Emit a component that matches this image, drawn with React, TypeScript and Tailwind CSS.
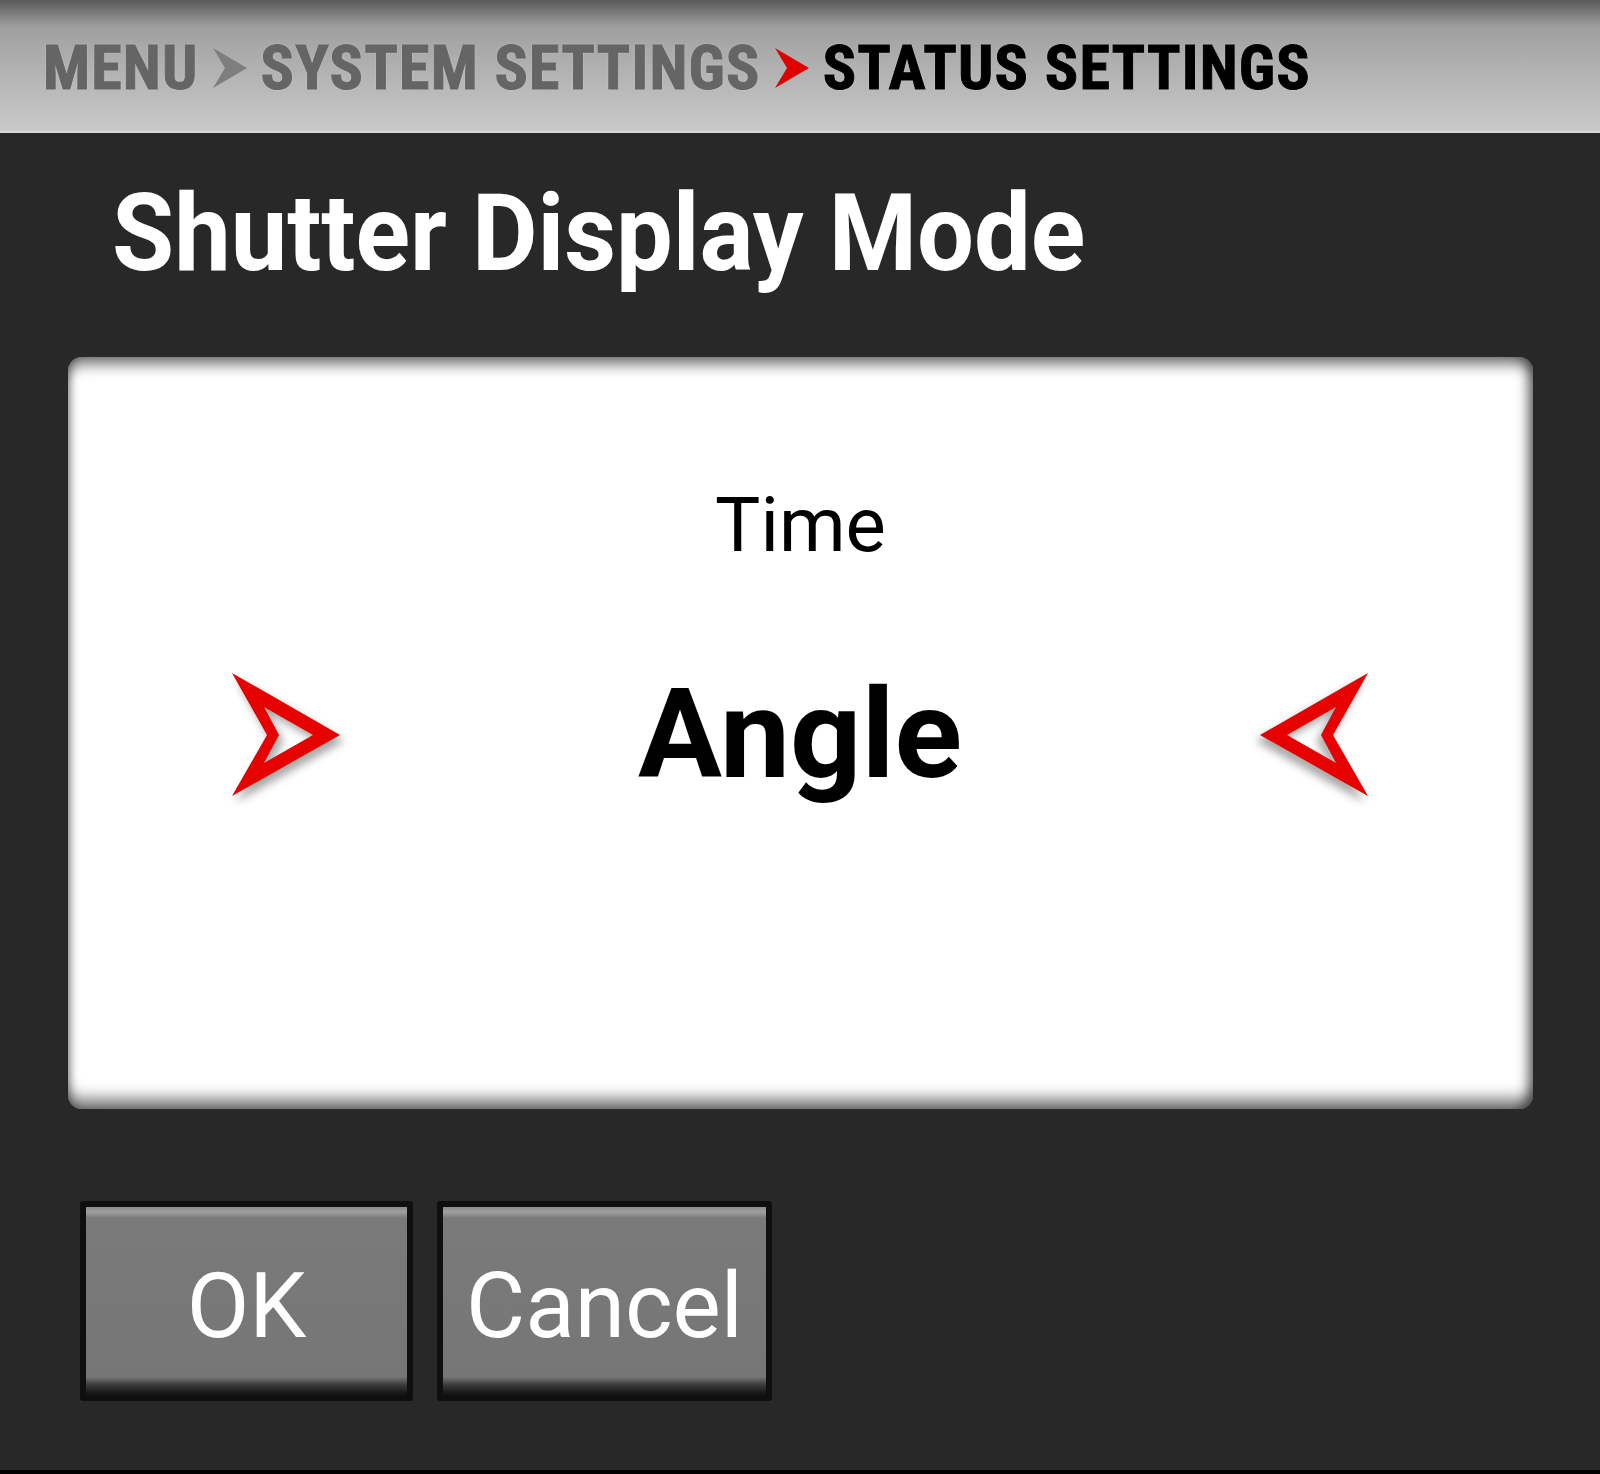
import React from 'react';

const Crumb: React.FC<{ red?: boolean }> = ({ red }) => (
  <svg width="34" height="40" viewBox="0 0 34 40" className="shrink-0">
    <path d="M0 0 L34 20 L0 40 L12 20 Z" fill={red ? '#e00000' : '#7e7e7e'} />
  </svg>
);

const Pointer: React.FC<{ flip?: boolean }> = ({ flip }) => (
  <svg
    width="110"
    height="124"
    viewBox="0 0 110 124"
    className={`shrink-0 overflow-visible ${flip ? '-scale-x-100' : ''}`}
    style={{ filter: 'drop-shadow(4px 6px 4px rgba(0,0,0,0.35))' }}
  >
    <path
      fillRule="evenodd"
      d="M0 0 L108 62 L0 123 L35 62 Z M32 34 L81 62 L32 90 L47 62 Z"
      fill="#e60000"
    />
  </svg>
);

const Button: React.FC<{ label: string; w: string }> = ({ label, w }) => (
  <div className={`${w} h-[200px] rounded-[3px] bg-[#0f0f0f] p-[6px]`}>
    <div className="flex h-full w-full items-center justify-center bg-[linear-gradient(to_bottom,#8c8c8c_0px,#a0a0a0_5px,#7a7a7a_11px,#767676_170px,#404040_177px,#161616_186px)] pt-[10px] font-['Roboto',sans-serif] text-[91px] leading-none text-white">
      {label}
    </div>
  </div>
);

export default function App() {
  const crumbText =
    "font-['Roboto_Condensed','Roboto',sans-serif] text-[62px] font-bold leading-none tracking-[1.2px] [-webkit-text-stroke:1px_currentColor] [text-shadow:0_0_2px_rgba(230,230,230,0.9)]";
  return (
    <div className="flex h-[1474px] w-[1600px] flex-col border-b-4 border-black bg-[#282828]">
      {/* breadcrumb bar */}
      <div className="flex h-[133px] shrink-0 items-center gap-[14px] border-b-2 border-[#d6d6d6] bg-[linear-gradient(to_bottom,#585858_0px,#9e9e9e_26px,#a8a8a8_45px,#c9c9c9_131px)] pl-[43px] pt-[4px]">
        <span className={`${crumbText} text-[#656565]`}>MENU</span>
        <Crumb />
        <span className={`${crumbText} text-[#656565]`}>SYSTEM SETTINGS</span>
        <Crumb red />
        <span className={`${crumbText} text-black`}>STATUS SETTINGS</span>
      </div>

      {/* title */}
      <h1 className="mt-[47px] pl-[112px] font-['Roboto',sans-serif] text-[107px] font-bold leading-none text-white">
        <span className="inline-block origin-left scale-x-[0.943]">Shutter Display Mode</span>
      </h1>

      {/* selector panel */}
      <div className="ml-[68px] mt-[70px] flex h-[752px] w-[1465px] flex-col items-center rounded-[14px] bg-white shadow-[inset_0_14px_14px_-6px_rgba(0,0,0,0.5),inset_-12px_0_12px_-6px_rgba(0,0,0,0.45),inset_0_-16px_16px_-6px_rgba(0,0,0,0.55),inset_6px_0_8px_-4px_rgba(0,0,0,0.3)]">
        <div className="mt-[130px] font-['Roboto',sans-serif] text-[76px] leading-none text-black">Time</div>
        <div className="mt-[109px] flex w-full items-center justify-between pl-[164px] pr-[165px]">
          <Pointer />
          <div className="font-['Roboto',sans-serif] text-[125px] font-bold leading-none text-black">Angle</div>
          <Pointer flip />
        </div>
      </div>

      {/* actions */}
      <div className="ml-[80px] mt-[92px] flex gap-[24px]">
        <Button label="OK" w="w-[333px]" />
        <Button label="Cancel" w="w-[335px]" />
      </div>
    </div>
  );
}
